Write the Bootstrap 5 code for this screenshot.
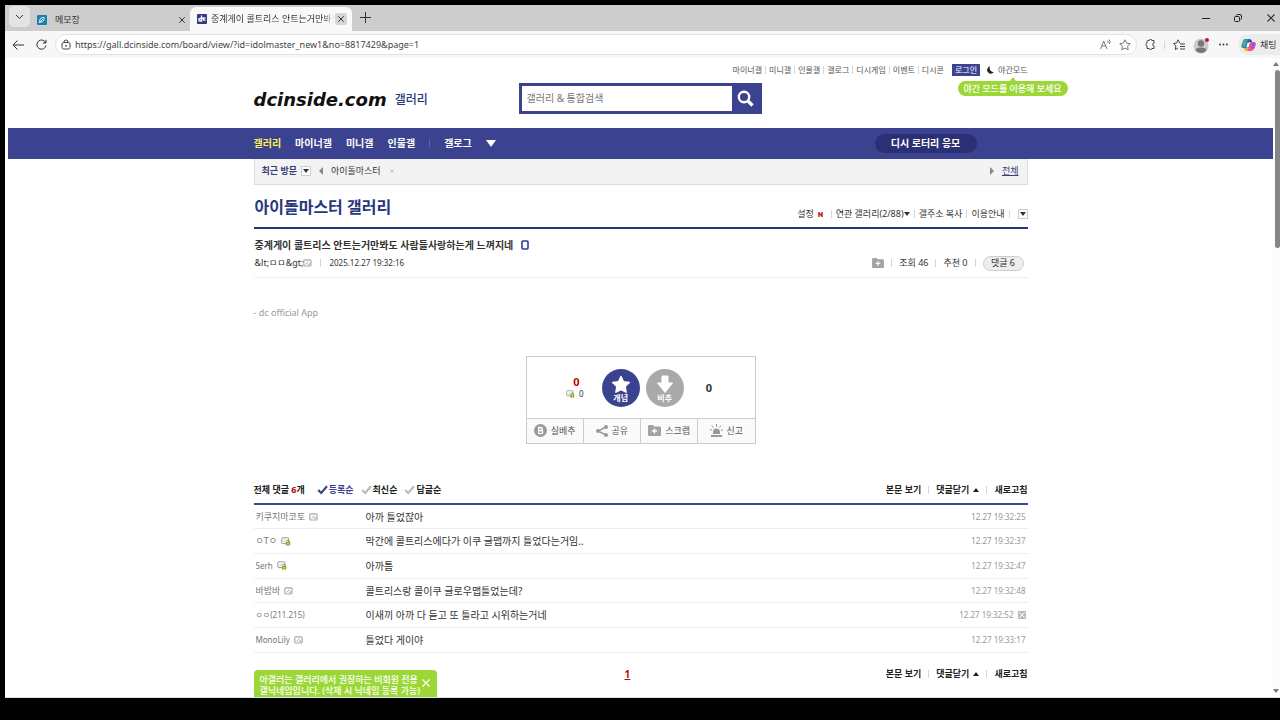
<!DOCTYPE html>
<html lang="ko">
<head>
<meta charset="utf-8">
<meta name="viewport" content="width=device-width, initial-scale=1">
<title>아이돌마스터 갤러리</title>
<link href="https://cdn.jsdelivr.net/npm/bootstrap@5.3.0/dist/css/bootstrap.min.css" rel="stylesheet">
<style>
:root{--navy:#3b4390;--deep:#29367c;--lime:#9bd837}
body{background:#000;color:#333;font-family:"Noto Sans","Noto Sans CJK KR",sans-serif;font-size:9px;line-height:12px;height:100vh;padding:5px 0 22px 5px;overflow:hidden}
a{color:inherit;text-decoration:none}
button{background:none;border:0;padding:0;color:inherit;font:inherit;line-height:inherit;white-space:nowrap}
svg{display:block;flex:none}
.browser{background:#fff;height:100%;overflow:hidden}
.tabstrip{background:#cdcdcd;height:27px}
.tabmenu{width:21px;height:21px;border-radius:5px;background:#e4e4e4}
.tab-idle{width:156px;padding-left:7px}
.tab-live{width:162px;height:24px;background:#f9f9f9;border-radius:6px 6px 0 0;padding:0 5px 0 7px}
.tab-live .tabname{overflow:hidden;white-space:nowrap;mask-image:linear-gradient(90deg,#000 90%,transparent);-webkit-mask-image:linear-gradient(90deg,#000 90%,transparent)}
.shut{width:12px;height:12px;border-radius:2px;background:#d6d6d6}
.toolbar{background:#f7f7f7;height:27px;padding-left:7px}
.addr{height:21px;border:1px solid #e2e2e2;border-radius:11px;background:#fff;padding:0 5px}
.addr input{border:0;outline:0;background:none;font-size:9px;color:#444;padding:0;min-width:0}
.menudots{margin-right:10px}
.chat{background:#ececec;border-radius:10px 0 0 10px;height:21px;width:42px;padding-left:3px;overflow:hidden}
.scroller{width:7px;background:#fcfcfc}
.thumb{height:178px;background:#858585;border-radius:3px;margin-left:2px}
.arrow-up{border:3px solid transparent;border-top:0;border-bottom:4px solid #777;width:0;height:0}
.arrow-down{border:3px solid transparent;border-bottom:0;border-top:4px solid #777;width:0;height:0}
.arrow-down.white{border-width:5px;border-top:7px solid #fff;border-bottom:0}
.arrow-up.ink{border-bottom-color:#222}.arrow-down.ink{border-top-color:#333}
.arrow-left,.arrow-right{width:0;height:0;border:4px solid transparent}
.arrow-left{border-left:0;border-right:4px solid #888}
.arrow-right{border-right:0;border-left:4px solid #888}
.wrap{width:100%;max-width:774px;margin:0 auto}
.vr1{width:1px;height:8px;background:#d5d5d5;flex:none}
.toplinks{font-size:8px;color:#555;gap:3px;padding-top:6px}
.login{background:var(--navy);color:#fff;padding:0 3px;margin:0 4px 0 5px}
.masthead{height:70px}
.logo{font:italic bold 18px/24px "DejaVu Sans",sans-serif;color:#111}
.sublogo{font-size:12px;color:var(--deep);font-weight:500}
.finder{width:243px;height:31px;border:3px solid var(--navy);background:var(--navy);left:265px;top:25px}
.finder input{border:0;border-radius:0;width:210px;padding:0 5px;font-size:10px;outline:0;color:#444}
.finder input::placeholder{color:#777}
.finder button{width:27px}
.tip{background:var(--lime);color:#fff;font-size:9px;font-weight:500;line-height:15px;border-radius:8px;width:110px;left:704px;top:23px;text-align:center}
.tip::before{content:"";position:absolute;left:52px;top:-4px;border:3px solid transparent;border-top:0;border-bottom:4px solid var(--lime)}
.gnb{background:var(--navy);color:#fff;height:31px;font-size:10px;font-weight:700}
.gnb .on{color:#ffee58}
.lotto{background:#2a3073;border-radius:10px;width:102px;height:19px;margin-right:51px}
.recent{height:26px;border:1px solid #dcdcdc;border-top:0;background:#f3f3f3;padding:0 8px 0 7px}
.drop{width:10px;height:10px;border:1px solid #ccc;background:#fff}
.boardhead{height:44px;border-bottom:2px solid var(--deep)}
.boardhead h1{font-size:16px;line-height:20px;font-weight:700;color:var(--deep);margin:0 0 10px 1px}
.boardopts{font-size:9px;gap:4px;padding-bottom:7px}
.post{height:49px;border-bottom:1px solid #eee;padding:9px 0 0 1px}
.post h2{font-size:10px;line-height:14px;font-weight:700;color:#333}
.post time{font-size:8px}
.counts{gap:7px}
.pill{border:1px solid #ccc;background:#eee;border-radius:8px;height:15px;width:41px}
.origin{color:#999;padding:29px 0 37px}
.vote{width:230px;border:1px solid #ccc}
.votetop{height:61px;padding:2px 3px 0 0}
.tally{margin-right:14px}
.votetop .down{margin:0 22px 0 6px}
.round{width:38px;height:38px;border-radius:50%;color:#fff;font-size:8px;line-height:8px;font-weight:700;background:#a9a9a9}
.round.up{background:var(--navy)}
.voteacts{height:25px;border-top:1px solid #ccc;background:#fafafa;color:#555}
.voteacts button{flex:1}
.voteacts button+button{border-left:1px solid #ccc}
.replyhead{margin-top:39px;height:22px;font-weight:700;color:#222;border-bottom:2px solid var(--navy);padding-bottom:6px}
.sorts{gap:7px}
.sorts button{gap:1px}
.replies{width:100%;height:148px;font-size:10px}
.replies td{border-bottom:1px solid #eee;padding:0;vertical-align:middle}
.replies .who{width:112px;padding-left:2px;color:#777;font-size:9px}
.replies .latin{font-size:8px}
.replies .when{color:#999;font-size:8px;text-align:right;padding-right:2px}
.moreacts{font-weight:700;color:#222;gap:7px}
.notice{width:183px;background:var(--lime);border-radius:4px;color:#fff;font-weight:500;line-height:11px;padding:4px 6px;height:40px;margin-top:2px}
.foot{padding-top:15px}
.pageno{color:#c00;font-size:10px;font-weight:700;text-decoration:underline;left:371px;top:15px}
</style>
</head>
<body>
<svg width="0" height="0" class="position-absolute" aria-hidden="true">
<defs>
<symbol id="x" viewBox="0 0 10 10"><path d="M1.500 1.500l7 7m0-7l-7 7" stroke="currentColor" stroke-width="1.200" fill="none"/></symbol>
<symbol id="card" viewBox="0 0 9 8"><rect x=".8" y=".8" width="7.200" height="6.200" rx="1" fill="#fff" stroke="#aaa" stroke-width="1.200"/><path d="M2.500 5.500l3-3M5 5.500h1.200V4" stroke="#aaa" fill="none"/></symbol>
<symbol id="cardlock" viewBox="0 0 10 9"><rect x=".8" y=".8" width="7" height="5.800" rx="1" fill="#fff" stroke="#999"/><path d="M2.500 5l2.500-2.500" stroke="#aaa"/><path d="M5.700 5.500v-1a1.200 1.200 0 012.500 0v1" stroke="#879b2a" fill="none"/><rect x="4.800" y="5" width="4.400" height="3.500" fill="#8da32a"/><path d="M7 6v1.500" stroke="#fff"/></symbol>
<symbol id="folder" viewBox="0 0 13 11"><path d="M0 1.200Q0 0 1.200 0H5l1.300 1.500h5.500Q13 1.500 13 2.700v7Q13 11 11.800 11H1.200Q0 11 0 9.800z" fill="#a3a3a3"/><path d="M6.500 3.500v5M4 6h5" stroke="#fff" stroke-width="1.400"/></symbol>
<symbol id="tick" viewBox="0 0 11 10"><path d="M1.200 5l3 3L10 1.200" stroke="currentColor" stroke-width="2.200" fill="none"/></symbol>
</defs>
</svg>
<div class="browser d-flex flex-column">
  <div class="tabstrip d-flex align-items-end">
    <button class="tabmenu d-flex align-items-center justify-content-center ms-1 mb-1" aria-label="탭 목록"><svg width="9" height="6" viewBox="0 0 9 6"><path d="M1 1l3.500 3.500L8 1" stroke="#333" fill="none"/></svg></button>
    <div class="tab-idle d-flex align-items-center h-100 pt-1">
      <svg width="10" height="10" viewBox="0 0 10 10"><rect width="10" height="10" rx="1" fill="#1583ad"/><path d="M3 7c-1-3 1-4.500 4-4.500C7.500 5 6 7.500 3 7zM2 8l4-4" stroke="#fff" fill="none"/></svg>
      <button class="ms-2 ps-0">메모장</button>
      <button class="ms-auto" aria-label="닫기"><svg width="8" height="8"><use href="#x"/></svg></button>
    </div>
    <div class="tab-live d-flex align-items-center ms-1">
      <svg width="10" height="10" viewBox="0 0 10 10"><rect width="10" height="10" rx="1" fill="#343a82"/><path d="M4.500 1.500V7H3a1.200 1.200 0 010-2.500h3M8.500 4H6.500v2.200h2" stroke="#fff" stroke-width="1.300" fill="none"/></svg>
      <button class="tabname ms-1 flex-grow-1">중계게이 콜트리스 안트는거만봐도</button>
      <button class="shut d-flex align-items-center justify-content-center" aria-label="닫기"><svg width="8" height="8"><use href="#x"/></svg></button>
    </div>
    <button class="ms-2 mb-2" aria-label="새 탭"><svg width="11" height="11" viewBox="0 0 11 11"><path d="M5.500 0v11M0 5.500h11" stroke="#333"/></svg></button>
    <div class="ms-auto d-flex align-items-center h-100 gap-4 pe-1">
      <button aria-label="최소화"><svg width="8" height="8" viewBox="0 0 8 8"><path d="M0 4.500h8" stroke="#222"/></svg></button>
      <button aria-label="이전 크기로"><svg width="8" height="8" viewBox="0 0 8 8"><rect x=".5" y="2.500" width="5" height="5" rx="1" fill="none" stroke="#222"/><path d="M2.500 1.500q0-1 1-1H6q1.500 0 1.500 1.500v2.500q0 1-1 1" fill="none" stroke="#222"/></svg></button>
      <button aria-label="창 닫기"><svg width="10" height="10"><use href="#x"/></svg></button>
    </div>
  </div>
  <div class="toolbar d-flex align-items-center">
    <button aria-label="뒤로"><svg width="12" height="10" viewBox="0 0 12 10"><path d="M12 5H1M5.500.5L1 5l4.500 4.500" stroke="#333" fill="none"/></svg></button>
    <button class="ms-2 ps-1 me-2" aria-label="새로 고침"><svg width="11" height="11" viewBox="0 0 11 11"><path d="M9.800 4A4.600 4.600 0 1010 6.500M10 .8V4H6.800" stroke="#333" fill="none"/></svg></button>
    <div class="addr d-flex align-items-center flex-grow-1">
      <svg width="10" height="11" viewBox="0 0 10 11" class="me-1"><rect x="1" y="3.500" width="8" height="6.500" rx="1.500" fill="none" stroke="#444"/><path d="M3 3.500V3a2 2 0 014 0v.5" stroke="#444" fill="none"/><circle cx="5" cy="6.800" r=".9" fill="#444"/></svg>
      <input class="flex-grow-1" type="text" aria-label="주소" value="https://gall.dcinside.com/board/view/?id=idolmaster_new1&amp;no=8817429&amp;page=1">
      <button class="me-2" aria-label="소리내어 읽기"><svg width="11" height="11" viewBox="0 0 11 11"><path d="M.5 10L3.700 2 7 10M1.700 7h4.200M7.500 1.500q1 1 .3 2.500M9 .5q2 2 .3 4.500" stroke="#777" fill="none"/></svg></button>
      <button aria-label="즐겨찾기 추가"><svg width="12" height="12" viewBox="0 0 12 12"><path d="M6 .8l1.600 3.300 3.600.5-2.600 2.600.6 3.600L6 9.100l-3.200 1.700.6-3.600L.8 4.600l3.600-.5z" stroke="#777" fill="none"/></svg></button>
    </div>
    <div class="d-flex align-items-center ms-2">
      <button class="me-2" aria-label="확장"><svg width="11" height="11" viewBox="0 0 11 11"><path d="M3 1.500h1.200a1.300 1.300 0 012.600 0H9v2.600a1.400 1.400 0 000 2.800v2.600H6.800a1.300 1.300 0 01-2.600 0H2V7A1.600 1.600 0 012 4V2.500q0-1 1-1z" stroke="#444" fill="none"/></svg></button>
      <i class="vr1"></i>
      <button class="ms-2 me-2" aria-label="즐겨찾기"><svg width="12" height="12" viewBox="0 0 12 12"><path d="M7 4.300L5 .8 3.600 4 .6 4.500l2.300 2.400-.6 3.700L5 9M7 5h5M7 7.500h5M7 10h5" stroke="#444" fill="none"/></svg></button>
      <button class="me-2" aria-label="프로필"><svg width="18" height="18" viewBox="0 0 18 18"><circle cx="8" cy="10" r="7.500" fill="#ccc"/><circle cx="8" cy="7.500" r="3.200" fill="#777"/><path d="M2.500 14.500q0-3 5.500-3t5.500 3Q8 19.500 2.500 14.500z" fill="#777"/><circle cx="14" cy="4" r="2" fill="#c4122f"/></svg></button>
      <button class="menudots" aria-label="설정 및 기타"><svg width="9" height="3" viewBox="0 0 9 3"><g fill="#333"><circle cx="1" cy="1.500" r=".9"/><circle cx="4.500" cy="1.500" r=".9"/><circle cx="8" cy="1.500" r=".9"/></g></svg></button>
    </div>
    <button class="chat d-flex align-items-center"><svg width="15" height="14" viewBox="0 0 15 14" class="me-1"><path d="M4 1h5L6 10H2Q0 10 .5 7L2 3Q2.500 1 4 1z" fill="#2d7fe0"/><path d="M2 3l4-2-2 8-3.500-1z" fill="#43b565"/><path d="M8 1q3 0 3 3h-4z" fill="#2456b8"/><path d="M9 4h4q2 0 1.500 3L13 11q-1 2-3 2H5z" fill="#ef5b75"/><path d="M12 4q3 0 2.500 3L13 11l-4-1z" fill="#a955d2"/><path d="M3 10h5l-1.500 3H5q-1.500 0-2-3z" fill="#f3a23a"/><path d="M6.500 5h2l-1 4h-2z" fill="#fff"/></svg>채팅</button>
  </div>

  <div class="d-flex flex-grow-1 overflow-hidden border-bottom">
    <main class="flex-grow-1 overflow-hidden" style="padding-left:3px">
      <header class="masthead wrap position-relative">
        <div class="toplinks d-flex align-items-center justify-content-end">
          <a href="#">마이너갤</a><i class="vr1"></i><a href="#">미니갤</a><i class="vr1"></i><a href="#">인물갤</a><i class="vr1"></i><a href="#">갤로그</a><i class="vr1"></i><a href="#">디시게임</a><i class="vr1"></i><a href="#">이벤트</a><i class="vr1"></i><a href="#">디시콘</a>
          <a href="#" class="login">로그인</a>
          <button class="d-flex align-items-center gap-1"><svg width="7" height="8" viewBox="0 0 7 8"><path d="M3 .3Q1.500 5 6.800 6.300 5 8.300 2.500 7.500-.5 6.300.2 3.300.8 1 3 .3z" fill="#222"/></svg>야간모드</button>
        </div>
        <div class="d-flex align-items-center gap-2 mt-2 pt-1"><a href="#" class="logo">dcinside.com</a><a href="#" class="sublogo">갤러리</a></div>
        <form class="finder d-flex position-absolute">
          <input type="search" placeholder="갤러리 &amp; 통합검색" aria-label="갤러리 &amp; 통합검색">
          <button type="button" class="d-flex align-items-center justify-content-center" aria-label="검색"><svg width="17" height="17" viewBox="0 0 17 17"><circle cx="7" cy="7" r="5.200" stroke="#fff" stroke-width="2.400" fill="none"/><path d="M11 11l4.500 4.500" stroke="#fff" stroke-width="3.200"/></svg></button>
        </form>
        <div class="tip position-absolute">야간 모드를 이용해 보세요</div>
      </header>
      <nav class="gnb">
        <div class="wrap h-100 d-flex align-items-center">
          <div class="d-flex align-items-center" style="gap:14px"><a href="#" class="on">갤러리</a><a href="#">마이너갤</a><a href="#">미니갤</a><a href="#">인물갤</a><i class="vr1 opacity-25"></i><a href="#">갤로그</a><button aria-label="더 보기"><i class="arrow-down white d-block"></i></button></div>
          <a href="#" class="lotto ms-auto d-flex align-items-center justify-content-center">디시 로터리 응모</a>
        </div>
      </nav>
      <div class="wrap">
        <div class="recent d-flex align-items-center">
          <span class="fw-bold text-nowrap" style="color:#383c70">최근 방문</span>
          <button class="drop d-flex align-items-center justify-content-center ms-1 me-2" aria-label="최근 방문 목록"><i class="arrow-down ink"></i></button>
          <button class="me-1 pe-1" aria-label="이전"><i class="arrow-left d-block"></i></button><a href="#" class="me-2">아이돌마스터</a><button class="text-black-50 opacity-50" aria-label="삭제"><svg width="6" height="6"><use href="#x"/></svg></button>
          <button class="ms-auto me-2" aria-label="다음"><i class="arrow-right d-block"></i></button><a href="#" class="text-decoration-underline" style="color:#383c70">전체</a>
        </div>
        <div class="boardhead d-flex justify-content-between align-items-end">
          <h1>아이돌마스터 갤러리</h1>
          <div class="boardopts d-flex align-items-center">
            <button class="d-flex">설정<svg width="5" height="5" viewBox="0 0 5 5" class="ms-1 mt-1"><path d="M1 0v5M4 0v5M1 1l3 3" stroke="#c22" stroke-width="1.500"/></svg></button><i class="vr1 ms-1"></i>
            <button class="d-flex align-items-center">연관 갤러리(2/88)<i class="arrow-down ink"></i></button><i class="vr1"></i>
            <button>갤주소 복사</button><i class="vr1"></i><a href="#">이용안내</a><i class="vr1"></i>
            <button class="drop d-flex align-items-center justify-content-center ms-1" aria-label="더 보기"><i class="arrow-down ink"></i></button>
          </div>
        </div>
        <article>
          <div class="post">
            <h2 class="mb-0 d-flex align-items-center">중계게이 콜트리스 안트는거만봐도 사람들사랑하는게 느껴지네<svg width="8" height="10" viewBox="0 0 8 10" class="ms-2"><rect x="1" y="1" width="6" height="8" rx="1" fill="#fff" stroke="#2f3c9c" stroke-width="1.600"/></svg></h2>
            <div class="d-flex align-items-center pe-1 pt-1">
              <span>&amp;lt;ㅁㅁ&amp;gt;</span><svg width="9" height="8"><use href="#card"/></svg><i class="vr1 ms-2 me-1"></i><time class="ps-1">2025.12.27 19:32:16</time>
              <div class="counts ms-auto d-flex align-items-center"><button aria-label="스크랩"><svg width="12" height="10"><use href="#folder"/></svg></button><i class="vr1"></i><span>조회 46</span><i class="vr1"></i><span>추천 0</span><i class="vr1"></i><button class="pill">댓글 6</button></div>
            </div>
          </div>
          <p class="origin mb-0">- dc official App</p>
          <div class="vote mx-auto">
            <div class="votetop d-flex align-items-center justify-content-center">
              <div class="tally text-end"><div class="fw-bold pe-1" style="color:#b00;font-size:11px">0</div><div class="d-flex align-items-center gap-1" style="font-size:8px"><svg width="9" height="8"><use href="#cardlock"/></svg>0</div></div>
              <button class="round up d-flex flex-column align-items-center justify-content-center ms-1"><svg width="20" height="19" viewBox="0 0 20 19"><path d="M10 1.500l2.500 5.200 5.800.8-4.200 4 1 5.700-5.100-2.700-5.100 2.700 1-5.700-4.200-4 5.800-.8z" fill="#fff" stroke="#fff" stroke-linejoin="round" stroke-width="1.500"/></svg>개념</button>
              <button class="round down d-flex flex-column align-items-center justify-content-center"><svg width="18" height="19" viewBox="0 0 18 19"><path d="M6 1h6v7h4.500L9 17.500 1.500 8H6z" fill="#fff" stroke="#fff" stroke-linejoin="round"/></svg>비추</button>
              <div class="fw-bold" style="font-size:11px">0</div>
            </div>
            <div class="voteacts d-flex">
              <button class="d-flex align-items-center justify-content-center gap-1"><svg width="13" height="13" viewBox="0 0 13 13"><circle cx="6.500" cy="6.500" r="6.500" fill="#999"/><path d="M4.700 3.500h2.200a1.400 1.400 0 010 3H4.700zm0 3h2.500a1.500 1.500 0 010 3.200H4.700z" stroke="#fff" stroke-width="1.300" fill="none"/></svg>실베추</button>
              <button class="d-flex align-items-center justify-content-center gap-1"><svg width="12" height="12" viewBox="0 0 12 12"><path d="M10 2L2 6l8 4" stroke="#999" stroke-width="1.400" fill="none"/><g fill="#999"><circle cx="10" cy="2" r="2"/><circle cx="2" cy="6" r="2"/><circle cx="10" cy="10" r="2"/></g></svg>공유</button>
              <button class="d-flex align-items-center justify-content-center gap-1"><svg width="13" height="11"><use href="#folder"/></svg>스크랩</button>
              <button class="d-flex align-items-center justify-content-center gap-1"><svg width="13" height="13" viewBox="0 0 13 13"><path d="M3 10V8a3.500 3.500 0 017 0v2zM1 11h11v2H1z" fill="#999"/><path d="M6.500 0v3M2 1.500l1.500 2M11 1.500l-1.500 2M0 6h2M11 6h2" stroke="#999"/></svg>신고</button>
            </div>
          </div>
        </article>
        <section>
          <div class="replyhead d-flex align-items-center">
            <span class="me-2">전체 댓글 <span style="color:#b00">6</span>개</span>
            <div class="sorts d-flex align-items-center">
              <button class="d-flex align-items-center ms-1" style="color:var(--navy)"><svg width="11" height="10"><use href="#tick"/></svg>등록순</button>
              <button class="d-flex align-items-center"><svg width="11" height="10" color="#bbb"><use href="#tick"/></svg>최신순</button>
              <button class="d-flex align-items-center"><svg width="11" height="10" color="#bbb"><use href="#tick"/></svg>답글순</button>
            </div>
            <div class="moreacts d-flex align-items-center ms-auto"><button>본문 보기</button><i class="vr1"></i><button class="d-flex align-items-center gap-1">댓글닫기<i class="arrow-up ink"></i></button><i class="vr1"></i><button>새로고침</button></div>
          </div>
          <table class="replies">
            <tbody>
            <tr><td class="who"><div class="d-flex align-items-center gap-1">키쿠지마코토<svg width="9" height="8"><use href="#card"/></svg></div></td><td>아까 틀었잖아</td><td class="when">12.27 19:32:25</td></tr>
            <tr><td class="who"><div class="d-flex align-items-center gap-1">ㅇTㅇ<svg width="10" height="9"><use href="#cardlock"/></svg></div></td><td>막간에 콜트리스에다가 이쿠 글맵까지 틀었다는거임..</td><td class="when">12.27 19:32:37</td></tr>
            <tr><td class="who latin"><div class="d-flex align-items-center gap-1">Serh<svg width="10" height="9"><use href="#cardlock"/></svg></div></td><td>아까틈</td><td class="when">12.27 19:32:47</td></tr>
            <tr><td class="who"><div class="d-flex align-items-center gap-1">바밤바<svg width="9" height="8"><use href="#card"/></svg></div></td><td>콜트리스랑 콜이쿠 글로우맵틀었는데?</td><td class="when">12.27 19:32:48</td></tr>
            <tr><td class="who latin">ㅇㅇ(211.215)</td><td>이새끼 아까 다 듣고 또 틀라고 시위하는거네</td><td class="when"><div class="d-flex align-items-center justify-content-end gap-1">12.27 19:32:52<button class="text-white" style="background:#bbb" aria-label="댓글 삭제"><svg width="8" height="8"><use href="#x"/></svg></button></div></td></tr>
            <tr><td class="who latin"><div class="d-flex align-items-center gap-1">MonoLily<svg width="9" height="8"><use href="#card"/></svg></div></td><td>틀었다 게이야</td><td class="when">12.27 19:33:17</td></tr>
            </tbody>
          </table>
          <div class="foot position-relative d-flex justify-content-between align-items-start">
            <div class="notice d-flex justify-content-between align-items-start text-nowrap"><span>아갤러는 갤러리에서 권장하는 비회원 전용<br>갤닉네임입니다. (삭제 시 닉네임 등록 가능)</span><button aria-label="안내 닫기" class="pt-1"><svg width="10" height="10"><use href="#x"/></svg></button></div>
            <a href="#" class="pageno position-absolute">1</a>
            <div class="moreacts d-flex align-items-center"><button>본문 보기</button><i class="vr1"></i><button class="d-flex align-items-center gap-1">댓글닫기<i class="arrow-up ink"></i></button><i class="vr1"></i><button>새로고침</button></div>
          </div>
        </section>
      </div>
    </main>
    <div class="scroller d-flex flex-column pt-1" aria-hidden="true"><i class="arrow-up"></i><div class="thumb mt-1"></div><i class="arrow-down mt-auto mb-1"></i></div>
  </div>
</div>
<script src="https://cdn.jsdelivr.net/npm/bootstrap@5.3.0/dist/js/bootstrap.bundle.min.js"></script>
</body>
</html>
